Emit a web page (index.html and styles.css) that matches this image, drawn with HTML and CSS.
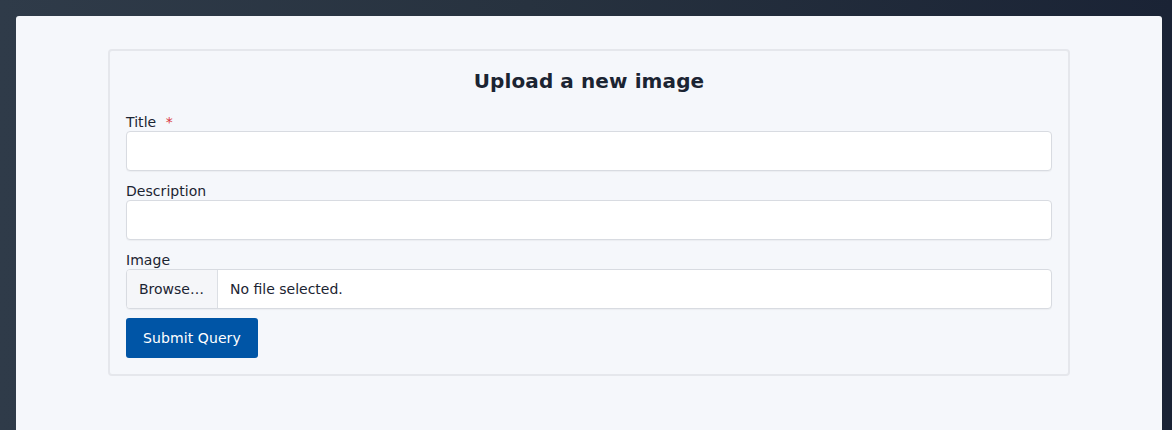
FILE: index.html
```html
<!DOCTYPE html>
<html lang="en">
<head>
<meta charset="utf-8">
<title>Upload a new image</title>
<link rel="stylesheet" href="styles.css">
</head>
<body>
<main class="panel">
  <form class="card">
    <h1 class="card-title">Upload a new image</h1>
    <div class="field">
      <label class="field-label" for="title">Title <span class="required">*</span></label>
      <input class="text-input" id="title" type="text">
    </div>
    <div class="field">
      <label class="field-label" for="desc">Description</label>
      <input class="text-input" id="desc" type="text">
    </div>
    <div class="field">
      <span class="field-label">Image</span>
      <div class="file-input">
        <span class="file-browse">Browse…</span>
        <span class="file-name">No file selected.</span>
      </div>
    </div>
    <div class="actions">
      <button class="submit-btn" type="button">Submit Query</button>
    </div>
  </form>
</main>
</body>
</html>
```

FILE: styles.css
```css
html, body {
  height: 100%;
}
body {
  margin: 0;
  padding: 16px 10px 0 16px;
  box-sizing: border-box;
  background: linear-gradient(to right, #2f3b49 0%, #27323f 45%, #1a2335 100%);
  font-family: "DejaVu Sans", Verdana, sans-serif;
  color: #1b2432;
  overflow: hidden;
}
.panel {
  background: #f5f7fb;
  border-radius: 3px 3px 0 0;
  min-height: 460px;
  padding: 33px 92px 0 92px;
  box-sizing: border-box;
}
.card {
  border: 2px solid #e5e7ec;
  border-radius: 4px;
  padding: 16px;
  display: flex;
  flex-direction: column;
  gap: 9px;
}
.card-title {
  margin: 0 0 7px 0;
  font-size: 20px;
  line-height: 28px;
  font-weight: bold;
  text-align: center;
  letter-spacing: 0.1px;
  color: #1b2432;
}
.field {
  display: flex;
  flex-direction: column;
}
.field-label {
  display: block;
  font-size: 14px;
  line-height: 18px;
  padding-top: 2px;
  letter-spacing: 0.05px;
  color: #1b2432;
}
.required {
  color: #d9363e;
  margin-left: 5px;
}
.text-input {
  height: 40px;
  box-sizing: border-box;
  margin: 0;
  border: 1px solid #d8dbe1;
  border-radius: 4px;
  background: #ffffff;
  box-shadow: 0 1px 1px rgba(0, 0, 0, 0.04);
  font-family: inherit;
  font-size: 14px;
  padding: 0 12px;
}
.file-input {
  display: flex;
  height: 40px;
  box-sizing: border-box;
  border: 1px solid #d8dbe1;
  border-radius: 4px;
  background: #ffffff;
  box-shadow: 0 1px 1px rgba(0, 0, 0, 0.04);
  overflow: hidden;
  font-size: 14px;
}
.file-browse {
  display: flex;
  align-items: center;
  padding: 0 13px 0 12px;
  background: #f5f6f9;
  border-right: 1px solid #dcdfe4;
  color: #1b2432;
}
.file-name {
  display: flex;
  align-items: center;
  padding: 0 12px;
  color: #1b2432;
}
.actions {
  display: flex;
}
.submit-btn {
  height: 40px;
  padding: 0 17px;
  border: none;
  border-radius: 3px;
  background: #0055a6;
  color: #ffffff;
  font-family: inherit;
  font-size: 14px;
  letter-spacing: 0.1px;
  cursor: pointer;
}
```
